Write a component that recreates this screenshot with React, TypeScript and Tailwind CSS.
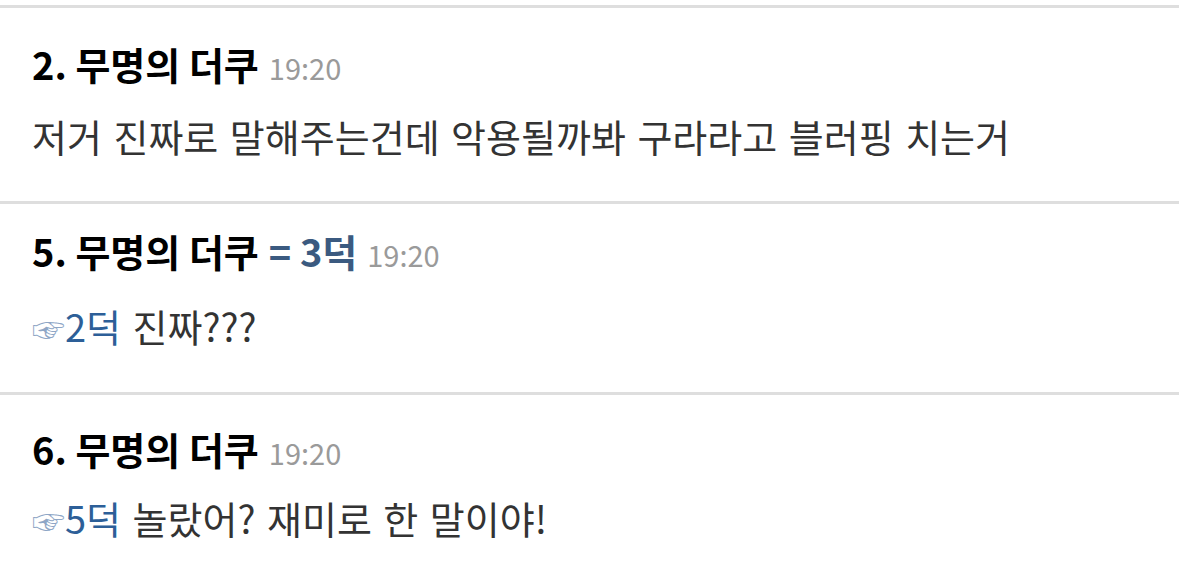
const font = { fontFamily: '"Noto Sans CJK KR", "Noto Sans", sans-serif' }

type Comment = {
  no: number
  reply?: number
  time: string
  to?: number
  text: string
  pt: string
  gap: string
  pb: string
}

const comments: Comment[] = [
  { no: 2, time: "19:20", text: "저거 진짜로 말해주는건데 악용될까봐 구라라고 블러핑 치는거", pt: "pt-[30px]", gap: "mt-[17px]", pb: "pb-[39px]" },
  { no: 5, reply: 3, time: "19:20", to: 2, text: "진짜???", pt: "pt-[21px]", gap: "mt-[20px]", pb: "pb-[40px]" },
  { no: 6, time: "19:20", to: 5, text: "놀랐어? 재미로 한 말이야!", pt: "pt-[28px]", gap: "mt-[14px]", pb: "pb-[37px]" },
]

function CommentItem({ c }: { c: Comment }) {
  return (
    <div className={`border-t-[3px] border-[#dedede] px-8 ${c.pt} ${c.pb}`}>
      <div className="flex items-baseline gap-[10px] leading-[52px]">
        <span className="text-[38px] font-bold text-black">{c.no}. 무명의 더쿠</span>
        {c.reply && (
          <span className="text-[38px] font-bold text-[#3b5a80]">= {c.reply}덕</span>
        )}
        <span className="text-[29px] text-[#9a9a9a]">{c.time}</span>
      </div>
      <div className={`${c.gap} text-[38px] leading-[52px] text-[#333] [word-spacing:3px]`}>
        {c.to && (
          <>
            <span className="text-[33px] leading-none text-[#8ea6c6]">☞</span>
            <span className="text-[#2d5f98]">{c.to}덕</span>{" "}
          </>
        )}
        {c.text}
      </div>
    </div>
  )
}

export default function App() {
  return (
    <div className="w-[1179px] h-[574px] overflow-hidden bg-white pt-[5px]" style={font}>
      {comments.map((c) => (
        <CommentItem key={c.no} c={c} />
      ))}
    </div>
  )
}
